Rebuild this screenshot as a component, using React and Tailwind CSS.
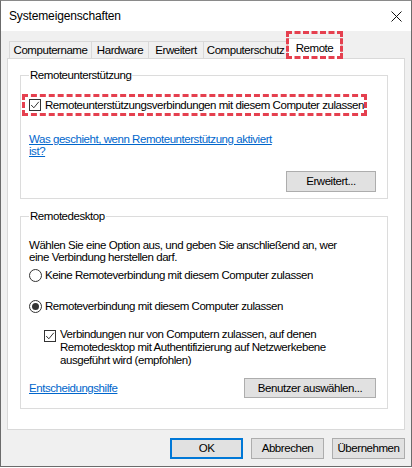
import React from 'react';

const font = { fontFamily: '"Liberation Sans", Arial, sans-serif' };

function CheckBox() {
  return (
    <span className="flex w-[12px] h-[12px] shrink-0 items-center justify-center border border-[#333] bg-white">
      <svg width="10" height="10" viewBox="0 0 10 10" fill="none">
        <polyline points="1.2,5 3.8,7.8 8.8,1.8" stroke="#333" strokeWidth="1" />
      </svg>
    </span>
  );
}

function Radio({ on }) {
  return (
    <span className="flex w-[13px] h-[13px] shrink-0 items-center justify-center rounded-full border border-[#333] bg-white">
      {on && <span className="w-[7px] h-[7px] rounded-full bg-[#333]" />}
    </span>
  );
}

const tabs = [
  { label: 'Computername', w: 'w-[83px]' },
  { label: 'Hardware', w: 'w-[58px]' },
  { label: 'Erweitert', w: 'w-[56px]' },
  { label: 'Computerschutz', w: 'w-[85px]' },
];

export default function App() {
  return (
    <div className="w-[412px] h-[468px] bg-white text-black text-[11.5px] leading-[13px] tracking-[-0.45px]" style={font}>
      <div className="h-[467px] flex flex-col border border-[#6b6b6b] border-t-[#8a8a8a]">
        {/* title bar */}
        <div className="h-[30px] shrink-0 flex items-center justify-between bg-white pl-[8px] pr-[9px]">
          <span className="text-[12px] tracking-[-0.15px]">Systemeigenschaften</span>
          <svg width="11" height="11" viewBox="0 0 11 11" className="mt-[1px]">
            <path d="M0.5 0.5 L10.5 10.5 M10.5 0.5 L0.5 10.5" stroke="#111" strokeWidth="1" />
          </svg>
        </div>

        <div className="flex-1 flex flex-col bg-[#f0f0f0] px-[6px]">
          {/* tabs */}
          <div className="h-[27px] flex items-end pl-[2px]">
            {tabs.map((t, i) => (
              <div
                key={t.label}
                className={`${t.w} h-[17px] flex items-center justify-center border-t border-l border-r border-[#d9d9d9] bg-[#f0f0f0] ${i > 0 ? '-ml-px' : ''}`}
              >
                {t.label}
              </div>
            ))}
            <div className="relative z-10 -ml-px -mb-px w-[55px] h-[21px] flex items-start justify-center pt-[3px] border-t border-l border-r border-[#d9d9d9] bg-white">
              Remote
              <span className="absolute -left-[2px] -right-[2px] -top-[8px] bottom-0 border-[3px] border-dashed border-[#e5404f]" />
            </div>
          </div>

          {/* panel */}
          <div className="h-[372px] shrink-0 bg-white border border-[#d9d9d9] pl-[12px] pr-[16px] pt-[10px]">
            <fieldset className="border border-[#dcdcdc] pl-[8px] pr-[11px] pb-[6px] flex flex-col">
              <legend className="px-[1px]">Remoteunterstützung</legend>
              <div className="mt-[12px] -ml-[7px] w-[345px] h-[22px] flex items-center gap-[4px] pl-[4px] border-[3px] border-dashed border-[#e5404f]">
                <CheckBox />
                <span className="whitespace-nowrap">Remoteunterstützungsverbindungen mit diesem Computer zulassen</span>
              </div>
              <a className="mt-[17px] text-[#0066cc] underline leading-[12px]">
                Was geschieht, wenn Remoteunterstützung aktiviert
                <br />
                ist?
              </a>
              <button className="mt-[14px] self-end w-[90px] h-[21px] bg-[#e1e1e1] border border-[#adadad]">
                Erweitert...
              </button>
            </fieldset>

            <fieldset className="mt-[11px] border border-[#dcdcdc] pl-[8px] pr-[11px] pb-[10px] flex flex-col">
              <legend className="px-[1px]">Remotedesktop</legend>
              <p className="mt-[16px] leading-[12px]">
                Wählen Sie eine Option aus, und geben Sie anschließend an, wer
                <br />
                eine Verbindung herstellen darf.
              </p>
              <div className="mt-[6px] flex items-center gap-[3px]">
                <Radio />
                <span>Keine Remoteverbindung mit diesem Computer zulassen</span>
              </div>
              <div className="mt-[18px] flex items-center gap-[3px]">
                <Radio on />
                <span>Remoteverbindung mit diesem Computer zulassen</span>
              </div>
              <div className="mt-[15px] ml-[15px] flex items-start gap-[4px]">
                <span className="mt-[2px]">
                  <CheckBox />
                </span>
                <span>
                  Verbindungen nur von Computern zulassen, auf denen
                  <br />
                  Remotedesktop mit Authentifizierung auf Netzwerkebene
                  <br />
                  ausgeführt wird (empfohlen)
                </span>
              </div>
              <div className="mt-[11px] flex items-center justify-between">
                <a className="text-[#0066cc] underline">Entscheidungshilfe</a>
                <button className="w-[132px] h-[20px] bg-[#e1e1e1] border border-[#adadad]">
                  Benutzer auswählen...
                </button>
              </div>
            </fieldset>
          </div>

          {/* dialog buttons */}
          <div className="mt-[8px] flex justify-end gap-[8px]">
            <button className="w-[73px] h-[21px] bg-[#e1e1e1] border-2 border-[#0078d7]">OK</button>
            <button className="w-[73px] h-[21px] bg-[#e1e1e1] border border-[#adadad]">Abbrechen</button>
            <button className="w-[73px] h-[21px] bg-[#e1e1e1] border border-[#adadad]">Übernehmen</button>
          </div>
        </div>
      </div>
    </div>
  );
}
